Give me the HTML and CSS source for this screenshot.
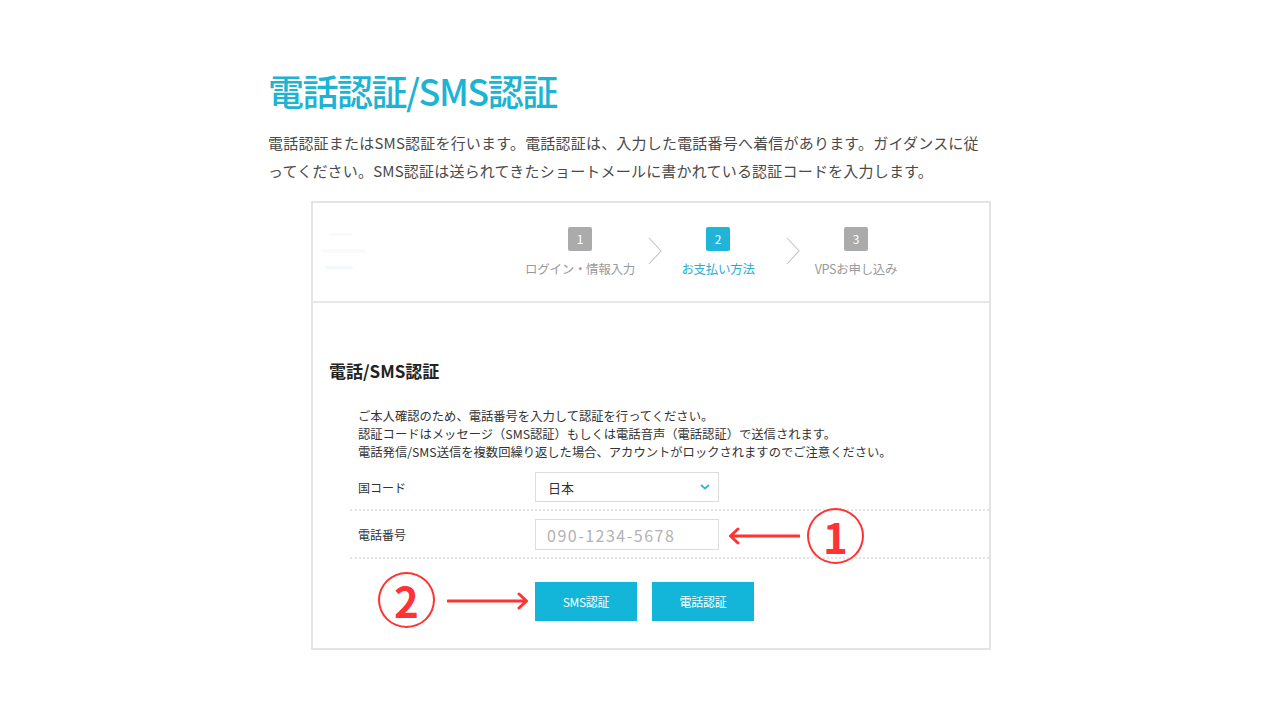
FILE: index.html
```html
<!DOCTYPE html>
<html lang="ja">
<head>
<meta charset="utf-8">
<title>電話認証/SMS認証</title>
<link rel="stylesheet" href="styles.css">
</head>
<body>
<main class="page">
  <h1 class="title">電話認証/SMS認証</h1>
  <p class="lead">電話認証またはSMS認証を行います。電話認証は、入力した電話番号へ着信があります。ガイダンスに従ってください。SMS認証は送られてきたショートメールに書かれている認証コードを入力します。</p>

  <section class="card">
    <header class="card-head">
      <div class="ghost-logo">
        <span class="g1"></span>
        <span class="g2"></span>
        <span class="g3"></span>
      </div>
      <ol class="steps">
        <li class="step">
          <span class="step-num">1</span>
          <span class="step-label">ログイン・情報入力</span>
        </li>
        <li class="step-sep"><svg width="14" height="28" viewBox="0 0 14 28"><path d="M1 1 L13 14 L1 27" fill="none" stroke="#c4c4c4" stroke-width="1.1"/></svg></li>
        <li class="step active">
          <span class="step-num">2</span>
          <span class="step-label">お支払い方法</span>
        </li>
        <li class="step-sep"><svg width="14" height="28" viewBox="0 0 14 28"><path d="M1 1 L13 14 L1 27" fill="none" stroke="#c4c4c4" stroke-width="1.1"/></svg></li>
        <li class="step">
          <span class="step-num">3</span>
          <span class="step-label">VPSお申し込み</span>
        </li>
      </ol>
    </header>

    <div class="card-body">
      <h2 class="sec-title">電話/SMS認証</h2>
      <div class="notes">
        <p>ご本人確認のため、電話番号を入力して認証を行ってください。</p>
        <p>認証コードはメッセージ（SMS認証）もしくは電話音声（電話認証）で送信されます。</p>
        <p>電話発信/SMS送信を複数回繰り返した場合、アカウントがロックされますのでご注意ください。</p>
      </div>
      <div class="form">
        <div class="row">
          <span class="label">国コード</span>
          <div class="select">
            <span>日本</span>
            <svg width="10" height="6" viewBox="0 0 10 6"><path d="M1 1 L5 4.5 L9 1" fill="none" stroke="#2fb6d8" stroke-width="1.8"/></svg>
          </div>
        </div>
        <div class="row">
          <span class="label">電話番号</span>
          <div class="input">090-1234-5678</div>
        </div>
        <div class="buttons">
          <button class="btn">SMS認証</button>
          <button class="btn">電話認証</button>
        </div>
      </div>
    </div>

    <div class="mark mark-1">1</div>
    <svg class="arrow arrow-1" width="72" height="18" viewBox="0 0 72 18"><path d="M71 9 H3 M10 2 L2.5 9 L10 16" fill="none" stroke="#ff3333" stroke-width="3" stroke-linecap="round" stroke-linejoin="round"/></svg>
    <div class="mark mark-2">2</div>
    <svg class="arrow arrow-2" width="82" height="18" viewBox="0 0 82 18"><path d="M1 9 H79 M72 2 L79.5 9 L72 16" fill="none" stroke="#ff3333" stroke-width="3" stroke-linecap="round" stroke-linejoin="round"/></svg>
  </section>
</main>
</body>
</html>
```

FILE: styles.css
```css
* { box-sizing: border-box; }

body {
  margin: 0;
  background: #ffffff;
  font-family: "Noto Sans CJK JP", "Noto Sans", sans-serif;
  color: #444;
}

.page {
  padding: 65px 0 0 268px;
  width: 1000px;
}

.title {
  margin: 0;
  font-size: 36px;
  line-height: 50px;
  font-weight: 500;
  color: #1db3d3;
  letter-spacing: -1.5px;
}

.lead {
  margin: 14px 0 0;
  width: 714px;
  font-size: 15px;
  line-height: 28px;
  color: #4a4a4a;
  letter-spacing: 0.2px;
}

.card {
  position: relative;
  margin: 16px 0 0 43px;
  width: 680px;
  height: 449px;
  border: 2px solid #e4e4e4;
  background: #fff;
}

.card-head {
  display: flex;
  height: 100px;
  border-bottom: 2px solid #e6e6e6;
}

.ghost-logo {
  width: 206px;
  padding: 30px 0 0 8px;
  display: flex;
  flex-direction: column;
  gap: 13px;
}
.ghost-logo span { display: block; height: 3px; background: #fafafa; border-radius: 2px; }
.ghost-logo .g1 { width: 24px; margin-left: 8px; }
.ghost-logo .g2 { width: 44px; height: 4px; }
.ghost-logo .g3 { width: 28px; margin-left: 4px; background: #f3f8fc; }

.steps {
  list-style: none;
  margin: 0;
  padding: 24px 0 0 11px;
  display: flex;
  align-items: flex-start;
}

.step {
  width: 100px;
  display: flex;
  flex-direction: column;
  align-items: center;
}

.step-num {
  width: 24px;
  height: 24px;
  border-radius: 2px;
  background: #ababab;
  color: #fff;
  font-size: 12px;
  line-height: 24px;
  text-align: center;
}

.step-label {
  margin-top: 8px;
  font-size: 12.5px;
  line-height: 20px;
  color: #9a9a9a;
  white-space: nowrap;
  letter-spacing: -0.3px;
}

.step.active .step-num { background: #1fb4d8; }
.step.active .step-label { color: #27aed2; }

.step-sep {
  width: 38px;
  padding: 10px 0 0 18px;
}
.step-sep svg { display: block; }

.card-body {
  padding: 55px 0 0 16px;
}

.sec-title {
  margin: 0;
  font-size: 17px;
  line-height: 26px;
  font-weight: 700;
  color: #222;
}

.notes {
  margin: 23px 0 0 29px;
  font-size: 12.3px;
  line-height: 18px;
  color: #333;
}
.notes p { margin: 0; }

.form {
  margin: 3px 0 0 21px;
}

.row {
  display: flex;
  align-items: center;
  padding: 8px 0 7px 8px;
  border-bottom: 2px dotted #e3e3e3;
}

.label {
  width: 177px;
  font-size: 12px;
  color: #333;
}

.select, .input {
  width: 184px;
  height: 30px;
  border: 1px solid #dcdcdc;
  padding: 0 12px;
  display: flex;
  align-items: center;
  font-size: 13px;
}
.select { justify-content: space-between; color: #333; padding-right: 8px; }
.input { height: 31px; color: #b3b3b3; font-size: 16px; letter-spacing: 1.5px; padding-left: 11px; }

.buttons {
  display: flex;
  gap: 15px;
  padding: 23px 0 0 185px;
}

.btn {
  width: 102px;
  height: 39px;
  border: 0;
  background: #13b6d8;
  color: #fff;
  font-family: "Noto Sans CJK JP", "Noto Sans", sans-serif;
  font-size: 12px;
  letter-spacing: -0.3px;
}

.mark {
  position: absolute;
  width: 57px;
  height: 56px;
  border: 2px solid #ff3333;
  border-radius: 50%;
  color: #ff3333;
  font-family: "Noto Sans CJK JP", "Noto Sans", sans-serif;
  font-weight: 700;
  font-size: 42px;
  line-height: 52px;
  text-align: center;
}
.mark-1 { left: 494px; top: 305px; }
.mark-2 { left: 65px; top: 369px; }

.arrow { position: absolute; }
.arrow-1 { left: 415px; top: 324px; }
.arrow-2 { left: 134px; top: 389px; }
```
